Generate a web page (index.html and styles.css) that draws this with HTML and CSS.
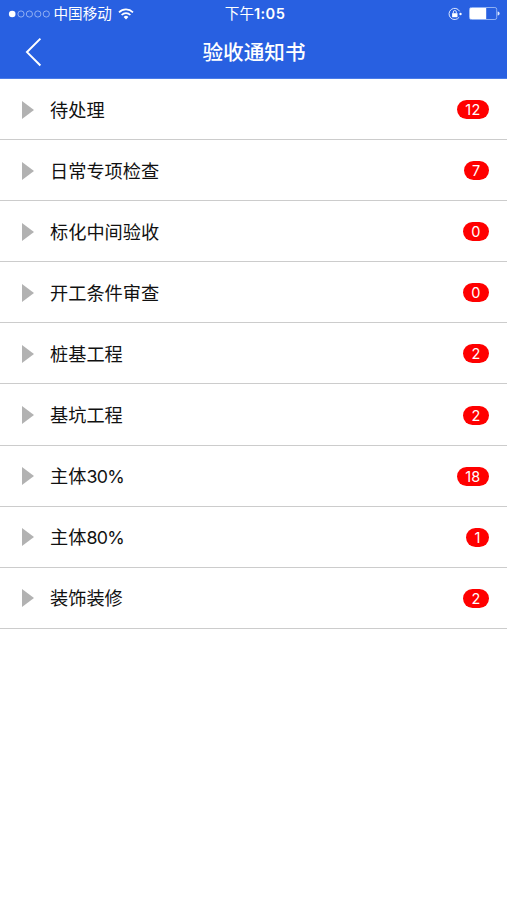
FILE: index.html
```html
<!DOCTYPE html>
<html lang="zh-CN">
<head>
<meta charset="utf-8">
<title>验收通知书</title>
<link rel="stylesheet" href="styles.css">
</head>
<body>
<header class="header">
  <div class="status">
    <div class="status-left">
      <svg class="signal" width="43" height="10" viewBox="0 0 43 10" fill="none" stroke="#a9c2f6" stroke-width=".8">
        <circle cx="4.2" cy="5" r="3.3" fill="#fff" stroke="none"/>
        <circle cx="13" cy="5" r="3.1"/><circle cx="21.4" cy="5" r="3.1"/><circle cx="29.8" cy="5" r="3.1"/><circle cx="38.3" cy="5" r="3.1"/>
      </svg>
      <span class="carrier">中国移动</span>
      <svg class="wifi" width="16" height="12" viewBox="0 0 16 12" fill="none" stroke="#fff" stroke-width="1.7">
        <path d="M1 4.3a10 10 0 0 1 14 0M3.6 7a6.3 6.3 0 0 1 8.8 0"/>
        <path d="M8 11.4 5.6 9a3.5 3.5 0 0 1 4.8 0z" fill="#fff" stroke="none"/>
      </svg>
    </div>
    <span class="time">下午<span class="clock">1:05</span></span>
    <div class="status-right">
      <svg width="14" height="14" viewBox="0 0 14 14" fill="none" stroke="#dce7ff">
        <path d="M11.2 10.2A5.6 5.6 0 1 1 11.6 4.3" stroke-width="1"/>
        <circle cx="12.5" cy="7" r="1.2" fill="#fff" stroke="none"/>
        <rect x="4.1" y="6.2" width="5.4" height="4" fill="#fff" stroke="none"/>
        <path d="M5.3 6.4V5a1.5 1.5 0 0 1 3 0v1.4" stroke-width="1"/>
      </svg>
      <svg width="31" height="13" viewBox="0 0 31 13">
        <rect x=".5" y=".5" width="27.2" height="12" rx="1.8" fill="none" stroke="#9dbaf5" stroke-width=".9"/>
        <path d="M2 1h15.2v11H2a1.2 1.2 0 0 1-1.2-1.2V2.2A1.2 1.2 0 0 1 2 1z" fill="#fff"/>
        <path d="M28.6 4.5a2 2 0 0 1 0 4z" fill="#dce7ff"/>
      </svg>
    </div>
  </div>
  <nav class="nav">
    <svg class="back" width="18" height="30" viewBox="0 0 18 30" fill="none" stroke="#fff" stroke-width="2"><path d="M15.4 1.6 2 15.1l13.4 13.4"/></svg>
    <h1 class="title">验收通知书</h1>
  </nav>
</header>
<ul class="list">
  <li class="row"><i class="arrow"></i><span class="label">待处理</span><span class="badge">12</span></li>
  <li class="row"><i class="arrow"></i><span class="label">日常专项检查</span><span class="badge">7</span></li>
  <li class="row"><i class="arrow"></i><span class="label">标化中间验收</span><span class="badge">0</span></li>
  <li class="row"><i class="arrow"></i><span class="label">开工条件审查</span><span class="badge">0</span></li>
  <li class="row"><i class="arrow"></i><span class="label">桩基工程</span><span class="badge">2</span></li>
  <li class="row"><i class="arrow"></i><span class="label">基坑工程</span><span class="badge">2</span></li>
  <li class="row"><i class="arrow"></i><span class="label">主体<span class="percent">30%</span></span><span class="badge">18</span></li>
  <li class="row"><i class="arrow"></i><span class="label">主体<span class="percent">80%</span></span><span class="badge">1</span></li>
  <li class="row"><i class="arrow"></i><span class="label">装饰装修</span><span class="badge">2</span></li>
</ul>
</body>
</html>
```

FILE: styles.css
```css
* { box-sizing: border-box; }
body {
  margin: 0;
  background: #fff;
  color: #111;
  font-family: Inter, "Noto Sans CJK SC", sans-serif;
}
.header {
  height: 79px;
  background: #2860e1;
  border-bottom: 1px solid #4b7ce8;
  color: #fff;
}
.status {
  display: grid;
  grid-template-columns: 1fr auto 1fr;
  align-items: center;
  height: 27px;
  padding: 0 7px 0 8px;
}
.status-left, .status-right { display: flex; align-items: center; }
.status-right { justify-content: flex-end; gap: 7px; }
.carrier { margin-left: 2.5px; font-size: 14.6px; line-height: 20px; }
.wifi { margin-left: 6px; }
.time { padding-left: 2px; font-size: 14.6px; line-height: 20px; }
.clock { font-weight: 600; letter-spacing: .4px; }
.nav {
  display: grid;
  grid-template-columns: 1fr auto 1fr;
  align-items: center;
  height: 50px;
  padding-left: 25px;
  padding-right: 24px;
}
.title { margin: 0; padding-top: 2px; font-size: 20.6px; font-weight: 500; line-height: 30px; }
.list { margin: 0; padding: 0; list-style: none; }
.row {
  display: flex;
  align-items: center;
  height: 61.1px;
  padding: 1px 18px 0 22px;
  border-bottom: 1px solid #ccc;
}
.arrow {
  border: solid transparent;
  border-width: 9px 0 9px 12.5px;
  border-left-color: #b2b2b2;
}
.label { flex: 1; margin-left: 16px; font-size: 18.2px; line-height: 28px; }
.percent { font-size: 17.8px; letter-spacing: -.7px; }
.badge {
  height: 19px;
  padding: 0 8.5px;
  border-radius: 9.5px;
  background: #f00;
  color: #fff;
  font-size: 14.5px;
  letter-spacing: .2px;
  line-height: 19px;
}
```
